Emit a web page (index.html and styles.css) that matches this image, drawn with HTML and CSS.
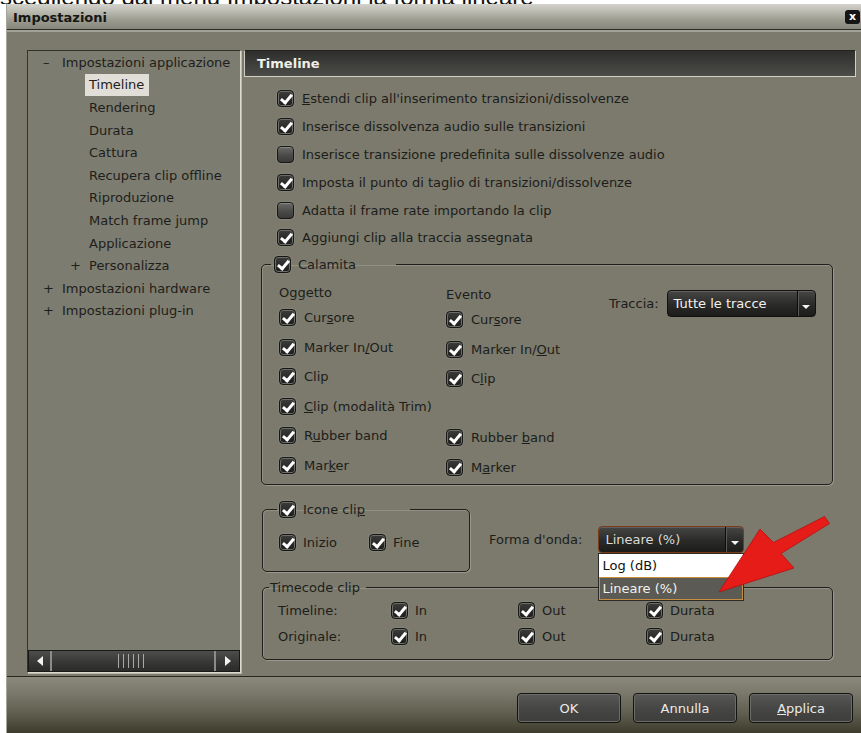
FILE: index.html
```html
<!DOCTYPE html>
<html lang="it">
<head>
<meta charset="utf-8">
<title>Impostazioni</title>
<link rel="stylesheet" href="styles.css">
</head>
<body>
<p class="caption"><span>scegliendo dal menu Impostazioni la forma lineare</span></p>
<div class="dialog">
  <div class="titlebar">
    <span class="title">Impostazioni</span>
    <span class="close">x</span>
  </div>

  <div class="main">
    <div class="tree">
      <ul class="nodes">
        <li class="node l0"><span class="exp">–</span><span class="txt">Impostazioni applicazione</span></li>
        <li class="node l1"><span class="exp"></span><span class="txt sel">Timeline</span></li>
        <li class="node l1"><span class="exp"></span><span class="txt">Rendering</span></li>
        <li class="node l1"><span class="exp"></span><span class="txt">Durata</span></li>
        <li class="node l1"><span class="exp"></span><span class="txt">Cattura</span></li>
        <li class="node l1"><span class="exp"></span><span class="txt">Recupera clip offline</span></li>
        <li class="node l1"><span class="exp"></span><span class="txt">Riproduzione</span></li>
        <li class="node l1"><span class="exp"></span><span class="txt">Match frame jump</span></li>
        <li class="node l1"><span class="exp"></span><span class="txt">Applicazione</span></li>
        <li class="node l1"><span class="exp">+</span><span class="txt">Personalizza</span></li>
        <li class="node l0"><span class="exp">+</span><span class="txt">Impostazioni hardware</span></li>
        <li class="node l0"><span class="exp">+</span><span class="txt">Impostazioni plug-in</span></li>
      </ul>
      <div class="hscroll">
        <span class="sb-btn sb-left"><span class="tri-left"></span></span>
        <span class="sb-track"><span class="grip"></span></span>
        <span class="sb-btn sb-right"><span class="tri-right"></span></span>
      </div>
    </div>

    <div class="page">
      <div class="page-head">Timeline</div>

      <div class="opts">
        <label class="opt"><span class="cb on"></span><span><u>E</u>stendi clip all'inserimento transizioni/dissolvenze</span></label>
        <label class="opt"><span class="cb on"></span><span>Inserisce dissolvenza audio sulle transizioni</span></label>
        <label class="opt"><span class="cb"></span><span>Inserisce transizione predefinita sulle dissolvenze audio</span></label>
        <label class="opt"><span class="cb on"></span><span>Imposta il punto di taglio di transizioni/dissolvenze</span></label>
        <label class="opt"><span class="cb"></span><span>Adatta il frame rate importando la clip</span></label>
        <label class="opt"><span class="cb on"></span><span>Aggiungi clip alla traccia assegnata</span></label>
      </div>

      <fieldset class="group snap-group">
        <legend><span class="legend-in"><span class="cb on"></span><span>Calamita</span></span></legend>
        <div class="snap">
          <div class="col col-obj">
            <div class="col-head">Oggetto</div>
            <label class="opt row"><span class="cb on"></span><span>Cur<u>s</u>ore</span></label>
            <label class="opt row"><span class="cb on"></span><span>Marker In<u>/</u>Out</span></label>
            <label class="opt row"><span class="cb on"></span><span>Clip</span></label>
            <label class="opt row"><span class="cb on"></span><span><u>C</u>lip (modalità Trim)</span></label>
            <label class="opt row"><span class="cb on"></span><span>R<u>u</u>bber band</span></label>
            <label class="opt row"><span class="cb on"></span><span>Mar<u>k</u>er</span></label>
          </div>
          <div class="col col-ev">
            <div class="col-head">Evento</div>
            <label class="opt row"><span class="cb on"></span><span>Cur<u>s</u>ore</span></label>
            <label class="opt row"><span class="cb on"></span><span>Marker In/<u>O</u>ut</span></label>
            <label class="opt row"><span class="cb on"></span><span>C<u>l</u>ip</span></label>
            <div class="row"></div>
            <label class="opt row"><span class="cb on"></span><span>Rubber <u>b</u>and</span></label>
            <label class="opt row"><span class="cb on"></span><span>M<u>a</u>rker</span></label>
          </div>
          <div class="track">
            <span>Traccia:</span>
            <div class="combo combo-track">
              <span class="combo-val">Tutte le tracce</span>
              <span class="combo-btn"><span class="tri-down"></span></span>
            </div>
          </div>
        </div>
      </fieldset>

      <div class="row2">
        <fieldset class="group icons-group">
          <legend><span class="legend-in"><span class="cb on"></span><span>Icone cli<u>p</u></span></span></legend>
          <div class="icons-row">
            <label class="opt ic"><span class="cb on"></span><span>Inizio</span></label>
            <label class="opt ic"><span class="cb on"></span><span>Fine</span></label>
          </div>
        </fieldset>
        <div class="wave">
          <span>Forma d'onda:</span>
          <div class="combo combo-wave">
            <span class="combo-val">Lineare (%)</span>
            <span class="combo-btn"><span class="tri-down"></span></span>
            <ul class="combo-list">
              <li>Log (dB)</li>
              <li class="hl">Lineare (%)</li>
            </ul>
          </div>
        </div>
      </div>

      <fieldset class="group tc-group">
        <legend>Timecode clip</legend>
        <div class="tc-grid">
          <span class="tc-label">Timeline:</span>
          <label class="opt tc"><span class="cb on"></span><span>In</span></label>
          <label class="opt tc"><span class="cb on"></span><span>Out</span></label>
          <label class="opt tc"><span class="cb on"></span><span>Durata</span></label>
          <span class="tc-label">Originale:</span>
          <label class="opt tc"><span class="cb on"></span><span>In</span></label>
          <label class="opt tc"><span class="cb on"></span><span>Out</span></label>
          <label class="opt tc"><span class="cb on"></span><span>Durata</span></label>
        </div>
      </fieldset>

      <!-- red pointer drawn over the open list, in screen coordinates -->
      <svg class="pointer" width="140" height="95" viewBox="700 505 140 95">
        <polygon points="824.5,516.5 829.5,523.5 781,553.5 794,568 719,592 760,529 773.5,542.5" fill="#e51c18" stroke="#b80f0c" stroke-width="0.8" stroke-linejoin="round"/>
      </svg>
    </div>
  </div>

  <div class="footer">
    <button class="btn">OK</button>
    <button class="btn">Annulla</button>
    <button class="btn"><u>A</u>pplica</button>
  </div>
</div>
</body>
</html>
```

FILE: styles.css
```css
* { box-sizing: border-box; }

html, body { margin: 0; padding: 0; }

body {
  width: 861px;
  height: 733px;
  overflow: hidden;
  background: #fff;
  font-family: "DejaVu Sans", "Noto Sans", sans-serif;
  font-size: 13px;
  color: #1d1d1a;
}

/* article text line cut off by the window above */
.caption {
  margin: 0;
  height: 4px;
  overflow: hidden;
  font-family: "Liberation Sans", Arial, sans-serif;
  font-size: 24px;
  line-height: 24px;
  color: #111;
}
.caption span { display: block; margin-top: -15px; white-space: nowrap; }

.dialog {
  margin-left: 6px;
  width: 855px;
  height: 729px;
  display: flex;
  flex-direction: column;
  background: #7b7a6d;
  border-left: 1px solid #a6a59a;
}

/* title bar */
.titlebar {
  flex: none;
  height: 26px;
  display: flex;
  align-items: center;
  justify-content: space-between;
  padding: 0 1px 0 6px;
  background: linear-gradient(#d3d3cc 0%, #babab1 30%, #9b9b8f 65%, #86867a 100%);
  border-bottom: 1px solid #2c2c27;
}
.title {
  font-weight: bold;
  font-size: 13px;
  color: #161614;
  padding-top: 2px;
}
.close {
  width: 15px;
  height: 14px;
  border-radius: 3px;
  background: #151515;
  color: #fff;
  font-size: 11px;
  font-weight: bold;
  line-height: 13px;
  text-align: center;
}

/* tree + page */
.main {
  flex: none;
  height: 646px;
  display: flex;
  gap: 3px;
  padding: 18px 5px 3px 20px;
  border-top: 2px solid #a3a296;
}

.tree {
  flex: none;
  width: 214px;
  height: 623px;
  display: flex;
  flex-direction: column;
  background: #7d7c70;
  border: 1px solid;
  border-color: #33332d #dcdacf #dcdacf #33332d;
  box-shadow: 1px 1px 0 #b9b7ab;
}
.nodes {
  list-style: none;
  margin: 0;
  padding: 0;
  color: #1e1e1b;
}
.node {
  height: 22.6px;
  display: flex;
  align-items: center;
  white-space: nowrap;
}
.node.l0 { padding-left: 15px; }
.node.l1 { padding-left: 42px; }
.exp { flex: none; width: 19px; }
.sel {
  background: #e0ded6;
  height: 22px;
  line-height: 22px;
  padding: 0 5px 0 4px;
  margin-left: -4px;
  color: #222;
}

/* horizontal scrollbar at the foot of the tree */
.hscroll {
  margin-top: auto;
  height: 22px;
  display: flex;
  border: 1px solid #181816;
  background: linear-gradient(#4d4d4b, #3a3a38 50%, #2b2b29);
}
.sb-btn {
  flex: none;
  display: flex;
  align-items: center;
  justify-content: center;
}
.sb-left { width: 23px; border-right: 2px solid #8c8c88; }
.sb-right { width: 25px; border-left: 2px solid #8c8c88; }
.tri-left {
  width: 0; height: 0;
  border-top: 5px solid transparent;
  border-bottom: 5px solid transparent;
  border-right: 6px solid #f2f2f2;
}
.tri-right {
  width: 0; height: 0;
  border-top: 5px solid transparent;
  border-bottom: 5px solid transparent;
  border-left: 6px solid #f2f2f2;
}
.sb-track {
  flex: 1;
  display: flex;
  align-items: center;
  justify-content: center;
}
.grip {
  width: 30px;
  height: 14px;
  background: repeating-linear-gradient(90deg, #a9a9a5 0 1px, transparent 1px 5px);
}

/* right page */
.page {
  flex: 1;
  position: relative;
  display: flex;
  flex-direction: column;
}
.page-head {
  height: 27px;
  border: 1px solid #d2d0c4;
  border-top-color: #24241f;
  border-left-color: #cfcdc1;
  background: linear-gradient(#2e2e2c, #4c4c49);
  color: #efeee8;
  font-weight: bold;
  line-height: 25px;
  padding-left: 12px;
}

.opts {
  margin-top: 8px;
  padding-left: 33px;
}
.opt {
  display: flex;
  align-items: center;
  gap: 8px;
  height: 27.8px;
  white-space: nowrap;
}

/* checkbox */
.cb {
  position: relative;
  flex: none;
  width: 17px;
  height: 17px;
  border-radius: 4px;
  border: 1px solid #161614;
  background: linear-gradient(#6a6a67, #4a4a48 55%, #3a3a38);
  box-shadow: inset 0 1px 0 rgba(255, 255, 255, 0.22), 0 0 0 1px rgba(150, 150, 140, 0.35);
}
.cb.on {
  background: linear-gradient(#3c3c3b, #1c1c1b);
  box-shadow: inset 0 0 0 1px #6c6c69, 0 0 0 1px rgba(150, 150, 140, 0.3);
}
.cb.on::after {
  content: "";
  position: absolute;
  left: 5px;
  top: 1px;
  width: 4px;
  height: 9px;
  border: solid #fff;
  border-width: 0 3px 3px 0;
  transform: rotate(40deg);
}

/* group boxes */
.group {
  margin: 0;
  border: 1px solid #1f1f1c;
  border-radius: 5px;
  box-shadow: 1px 1px 0 rgba(190, 188, 176, 0.45), inset 1px 1px 0 rgba(190, 188, 176, 0.35);
  min-width: 0;
}
.group legend { padding: 0; }
.legend-in {
  display: flex;
  align-items: center;
  gap: 7px;
  height: 18px;
}

.snap-group {
  margin: 4px 23px 0 17px;
  padding: 9px 0 2px 9px;
}
.snap-group legend { padding: 0 40px 0 3px; }
.snap {
  display: flex;
  margin-left: 8px;
}
.col { flex: none; }
.col-obj { width: 167px; }
.col-ev { width: 163px; padding-top: 2px; }
.col-head { height: 20px; line-height: 20px; }
.row { height: 29.6px; }
.track {
  display: flex;
  align-items: center;
  gap: 8px;
  margin-top: 7px;
  height: 27px;
}

/* combo boxes */
.combo {
  position: relative;
  display: flex;
  height: 27px;
  border: 1px solid #111;
  border-radius: 4px;
  background: linear-gradient(#464645, #2a2a29 55%, #1c1c1b);
  color: #f1f1ee;
  box-shadow: inset 0 1px 0 rgba(255, 255, 255, 0.15);
}
.combo-track { width: 149px; }
.combo-val {
  flex: 1;
  padding-left: 6px;
  line-height: 25px;
  white-space: nowrap;
}
.combo-btn {
  flex: none;
  width: 18px;
  display: flex;
  justify-content: center;
  align-items: flex-end;
  padding-bottom: 7px;
  border-left: 1px solid #0c0c0c;
  box-shadow: inset 1px 0 0 #5a5a58;
}
.tri-down {
  width: 0; height: 0;
  border-left: 4px solid transparent;
  border-right: 4px solid transparent;
  border-top: 4px solid #f4f4f4;
}

.row2 {
  display: flex;
  align-items: flex-start;
  margin-top: 15px;
}
.icons-group {
  flex: none;
  width: 208px;
  margin-left: 18px;
  padding: 13px 0 18px 14px;
}
.icons-group legend { padding: 0 45px 0 2px; }
.icons-row {
  display: flex;
  margin-left: 2px;
}
.opt.ic { height: 22px; gap: 7px; }
.opt.ic:first-child { width: 90px; }

.wave {
  display: flex;
  align-items: center;
  gap: 16px;
  margin: 26px 0 0 19px;
}
.combo-wave {
  width: 146px;
  border-color: #7a3a1a;
  color: #dcdcd8;
}
.combo-list {
  position: absolute;
  left: -1px;
  right: -1px;
  top: calc(100% + 1px);
  z-index: 2;
  margin: 0;
  padding: 0;
  list-style: none;
  background: #fff;
  border: 1px solid #2a2a27;
}
.combo-list li {
  height: 23px;
  line-height: 23px;
  padding-left: 3px;
  color: #111;
}
.combo-list li.hl {
  background: #5b5a54;
  color: #f3f3ef;
  border: 1px solid #c68e3e;
  line-height: 21px;
  padding-left: 2px;
}

.tc-group {
  margin: 8px 23px 0 18px;
  padding: 2px 0 10px 6px;
}
.tc-group legend {
  padding: 0 6px 0 1px;
  line-height: 15px;
}
.tc-grid {
  display: grid;
  grid-template-columns: 113px 127px 128px auto;
  grid-auto-rows: 26px;
  align-items: center;
  margin-left: 9px;
}
.opt.tc { height: 26px; gap: 7px; }

.pointer {
  position: absolute;
  left: 456px;
  top: 455px;
  z-index: 3;
}

/* button strip */
.footer {
  flex: 1;
  display: flex;
  justify-content: flex-end;
  align-items: flex-start;
  gap: 12px;
  padding: 16px 8px 0 0;
  border-top: 1px solid #26261f;
  background: linear-gradient(#8a897d 0%, #7c7b6e 25%, #5f5e4f 65%, #3c3b2c 100%);
}
.btn {
  width: 104px;
  height: 30px;
  border: 1px solid #131311;
  border-radius: 4px;
  background: linear-gradient(#585856, #464644 50%, #3d3d3b);
  box-shadow: inset 0 0 0 1px #6b6b67;
  color: #ebebe7;
  font-family: "DejaVu Sans", "Noto Sans", sans-serif;
  font-size: 13px;
  padding: 0;
}
```
